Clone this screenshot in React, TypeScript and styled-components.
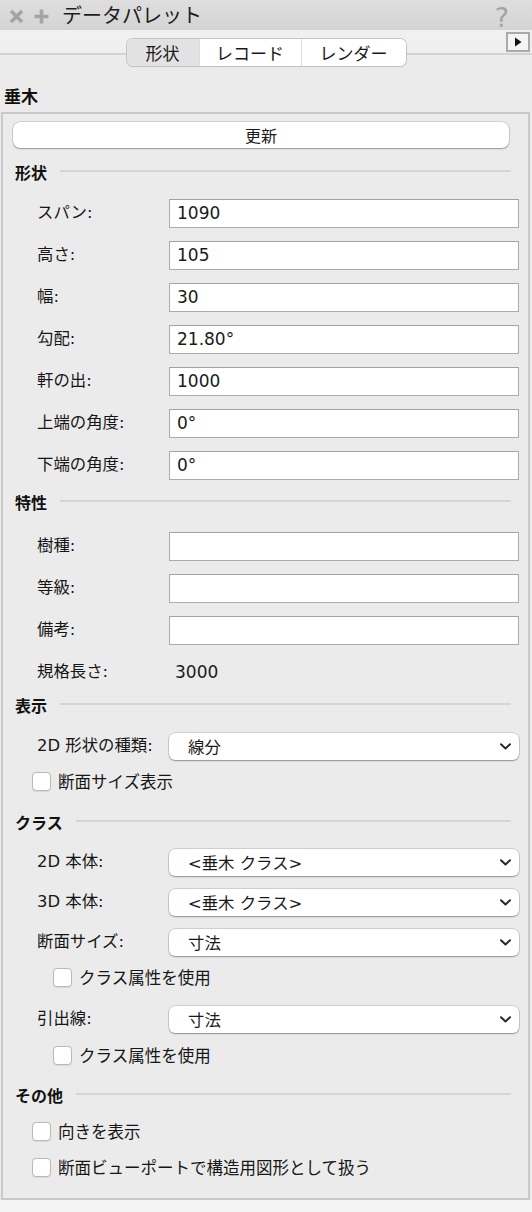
import React from "react";
import styled, { createGlobalStyle } from "styled-components";

const GlobalStyle = createGlobalStyle`
  html, body { margin: 0; padding: 0; }
  body {
    background: #ebebeb;
    font-family: "DejaVu Sans", "Noto Sans CJK JP", sans-serif;
    color: #1b1b1b;
  }
`;

const Window = styled.div`
  width: 532px;
  height: 1212px;
  display: flex;
  flex-direction: column;
  overflow: hidden;
  background: #ebebeb;
`;

const TitleBar = styled.div`
  height: 30px;
  display: flex;
  align-items: center;
  padding-left: 9px;
  background: linear-gradient(#dedede, #d4d4d4);
  box-sizing: border-box;
`;

const TitleIcon = styled.svg`
  width: 15px;
  height: 15px;
  margin-right: 10px;
  margin-top: 2px;
`;

const Title = styled.div`
  font-family: "Noto Sans CJK JP", sans-serif;
  font-size: 20px;
  line-height: 24px;
  color: #1e1e1e;
  margin-left: 3px;
`;

const Help = styled.div`
  margin-left: auto;
  margin-right: 23px;
  font-family: "DejaVu Sans", sans-serif;
  font-size: 27px;
  line-height: 30px;
  color: #a3a3a3;
  margin-top: 6px;
`;

const TabArea = styled.div`
  height: 40px;
  display: grid;
  grid-template-columns: 1fr auto 1fr;
  align-items: start;
  background: linear-gradient(
    to bottom,
    #f0f0f0 0px,
    #efefef 23px,
    #d3d3d3 23px,
    #d3d3d3 25px,
    #ebebeb 25px
  );
`;

const Segmented = styled.div`
  grid-column: 2;
  margin-top: 9px;
  display: flex;
  height: 27px;
  border-radius: 6px;
  background: #fff;
  box-shadow: 0 0 0 1px #c4c4c4, 0 1px 1px rgba(0, 0, 0, 0.18);
  overflow: hidden;
`;

const Segment = styled.div<{ $w: number; $active?: boolean; $divider?: boolean }>`
  width: ${(p) => p.$w}px;
  display: flex;
  align-items: center;
  justify-content: center;
  font-family: "Noto Sans CJK JP", sans-serif;
  font-size: 17px;
  color: #1a1a1a;
  background: ${(p) => (p.$active ? "#e2e2e2" : "#ffffff")};
  border-left: ${(p) => (p.$divider ? "1px solid #dcdcdc" : "none")};
  box-sizing: border-box;
`;

const ArrowBtn = styled.div`
  grid-column: 3;
  justify-self: end;
  margin-top: 2px;
  margin-right: 2px;
  width: 24px;
  height: 20px;
  box-sizing: border-box;
  border: 2px solid #a9a9a9;
  background: #f4f4f4;
  display: flex;
  align-items: center;
  justify-content: center;
`;

const ObjectName = styled.div`
  height: 42px;
  box-sizing: border-box;
  padding: 16px 0 0 4px;
  font-family: "Noto Sans CJK JP", sans-serif;
  font-weight: 700;
  font-size: 17px;
  line-height: 20px;
  color: #111;
`;

const Panel = styled.div`
  margin: 0 2px 0 1px;
  border: 2px solid #c9c9c9;
  background: #ebebeb;
  padding: 8px 0 13px 0;
  display: flex;
  flex-direction: column;
`;

const UpdateButton = styled.div`
  margin-left: 10px;
  width: 496px;
  height: 26px;
  border-radius: 7px;
  background: #fff;
  box-shadow: 0 0 0 0.5px rgba(0, 0, 0, 0.22), 0 1px 1.5px rgba(0, 0, 0, 0.28);
  display: flex;
  align-items: center;
  justify-content: center;
  font-family: "Noto Sans CJK JP", sans-serif;
  font-size: 16px;
  color: #1a1a1a;
`;

const Header = styled.div<{ $mt: number; $mb: number }>`
  margin-top: ${(p) => p.$mt}px;
  margin-bottom: ${(p) => p.$mb}px;
  height: 24px;
  display: flex;
  align-items: center;
  padding-left: 12px;
  padding-right: 17px;
  gap: 13px;
  font-family: "Noto Sans CJK JP", sans-serif;
  font-weight: 700;
  font-size: 16px;
  color: #111;
  &::after {
    content: "";
    flex: 1;
    height: 2px;
    background: #d5d5d5;
    margin-top: -2px;
  }
`;

const Row = styled.div<{ $h: number; $mt?: number }>`
  height: ${(p) => p.$h}px;
  margin-top: ${(p) => p.$mt ?? 0}px;
  display: grid;
  grid-template-columns: 166px 1fr;
  align-items: center;
  padding-right: 9px;
`;

const Label = styled.div`
  padding-left: 34px;
  font-size: 16.4px;
  line-height: 20px;
  color: #161616;
  white-space: nowrap;
`;

const TextField = styled.div`
  height: 29px;
  box-sizing: border-box;
  border: 1px solid #acacac;
  border-top-color: #a2a2a2;
  background: #fff;
  padding-left: 7px;
  display: flex;
  align-items: center;
  font-family: "DejaVu Sans", sans-serif;
  font-size: 17px;
  color: #1a1a1a;
`;

const Value = styled.div`
  padding-left: 6px;
  font-family: "DejaVu Sans", sans-serif;
  font-size: 17px;
  color: #1a1a1a;
`;

const Select = styled.div`
  height: 27px;
  border-radius: 6px;
  background: #fff;
  box-shadow: 0 0 0 0.5px rgba(0, 0, 0, 0.22), 0 1px 1.5px rgba(0, 0, 0, 0.3);
  display: flex;
  align-items: center;
  padding-left: 19px;
  padding-right: 8px;
  font-size: 16.4px;
  color: #1a1a1a;
  & > span {
    flex: 1;
  }
`;

const CheckRow = styled.div<{ $h: number; $indent: number; $mt?: number }>`
  height: ${(p) => p.$h}px;
  margin-top: ${(p) => p.$mt ?? 0}px;
  display: flex;
  align-items: center;
  padding-left: ${(p) => p.$indent}px;
  gap: 7px;
  font-size: 16.5px;
  color: #161616;
`;

const Box = styled.div`
  width: 19px;
  height: 19px;
  box-sizing: border-box;
  border-radius: 4px;
  border: 1px solid #b9b9b9;
  background: #fff;
  box-shadow: 0 0.5px 1px rgba(0, 0, 0, 0.08);
`;

const Footer = styled.div`
  flex: 1;
  background: #f3f3f3;
`;

const Chevron = () => (
  <svg width="11" height="7" viewBox="0 0 11 7">
    <path d="M1 1.2 L5.5 5.5 L10 1.2" fill="none" stroke="#2a2a2a" strokeWidth="2" strokeLinecap="round" strokeLinejoin="round" />
  </svg>
);

const Field = ({ label, value }: { label: string; value: string }) => (
  <Row $h={42}>
    <Label>{label}</Label>
    <TextField>{value}</TextField>
  </Row>
);

const SelectRow = ({ label, value, mt }: { label: string; value: string; mt?: number }) => (
  <Row $h={40} $mt={mt}>
    <Label>{label}</Label>
    <Select>
      <span>{value}</span>
      <Chevron />
    </Select>
  </Row>
);

const Check = ({ label, indent, h, mt }: { label: string; indent: number; h: number; mt?: number }) => (
  <CheckRow $h={h} $indent={indent} $mt={mt}>
    <Box />
    <span>{label}</span>
  </CheckRow>
);

export default function App() {
  return (
    <>
      <GlobalStyle />
      <Window>
        <TitleBar>
          <TitleIcon viewBox="0 0 15 15">
            <path d="M2 2 L13 13 M13 2 L2 13" stroke="#a4a4a4" strokeWidth="3.6" strokeLinecap="butt" />
          </TitleIcon>
          <TitleIcon viewBox="0 0 15 15">
            <path d="M7.5 0.5 V14.5 M0.5 7.5 H14.5" stroke="#a4a4a4" strokeWidth="3.6" />
          </TitleIcon>
          <Title>データパレット</Title>
          <Help>?</Help>
        </TitleBar>
        <TabArea>
          <Segmented>
            <Segment $w={72} $active>形状</Segment>
            <Segment $w={102} $divider>レコード</Segment>
            <Segment $w={105} $divider>レンダー</Segment>
          </Segmented>
          <ArrowBtn>
            <svg width="8" height="10" viewBox="0 0 8 10">
              <path d="M1 0.5 L7.5 5 L1 9.5 Z" fill="#111" />
            </svg>
          </ArrowBtn>
        </TabArea>
        <ObjectName>垂木</ObjectName>
        <Panel>
          <UpdateButton>更新</UpdateButton>

          <Header $mt={12} $mb={8}>形状</Header>
          <Field label="スパン:" value="1090" />
          <Field label="高さ:" value="105" />
          <Field label="幅:" value="30" />
          <Field label="勾配:" value="21.80°" />
          <Field label="軒の出:" value="1000" />
          <Field label="上端の角度:" value="0°" />
          <Field label="下端の角度:" value="0°" />

          <Header $mt={4} $mb={11}>特性</Header>
          <Field label="樹種:" value="" />
          <Field label="等級:" value="" />
          <Field label="備考:" value="" />
          <Row $h={42}>
            <Label>規格長さ:</Label>
            <Value>3000</Value>
          </Row>

          <Header $mt={0} $mb={9}>表示</Header>
          <SelectRow label="2D 形状の種類:" value="線分" />
          <Check label="断面サイズ表示" indent={29} h={30} />

          <Header $mt={14} $mb={8}>クラス</Header>
          <SelectRow label="2D 本体:" value="<垂木 クラス>" />
          <SelectRow label="3D 本体:" value="<垂木 クラス>" />
          <SelectRow label="断面サイズ:" value="寸法" />
          <Check label="クラス属性を使用" indent={50} h={30} />
          <SelectRow label="引出線:" value="寸法" mt={7} />
          <Check label="クラス属性を使用" indent={50} h={30} mt={1} />

          <Header $mt={13} $mb={6}>その他</Header>
          <Check label="向きを表示" indent={29} h={36} />
          <Check label="断面ビューポートで構造用図形として扱う" indent={29} h={36} />
        </Panel>
        <Footer />
      </Window>
    </>
  );
}
